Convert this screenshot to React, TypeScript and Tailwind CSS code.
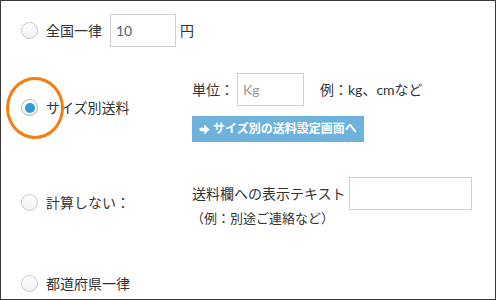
import React from "react";

const font = { fontFamily: 'Lato, "Noto Sans CJK JP", sans-serif' };

function Radio({ checked }: { checked?: boolean }) {
  return (
    <span
      className={`flex h-[17px] w-[17px] shrink-0 items-center justify-center rounded-full border ${
        checked ? "border-[#a9b6c3]" : "border-[#c9c9c9]"
      } bg-gradient-to-b from-white to-[#f1f1f1]`}
    >
      {checked && <span className="h-[10px] w-[10px] rounded-full bg-[#2f9bd7]" />}
    </span>
  );
}

function Arrow() {
  return (
    <svg width="11" height="11" viewBox="0 0 12 12" className="shrink-0">
      <path d="M1 4.4h5V1.2L11.2 6 6 10.8V7.6H1z" fill="white" stroke="white" strokeWidth="0.6" strokeLinejoin="round" />
    </svg>
  );
}

export default function App() {
  return (
    <div
      className="relative h-[300px] w-[496px] overflow-hidden border border-[#3a3a3a] bg-white text-[14px] text-[#333]"
      style={font}
    >
      {/* Row 1 */}
      <div className="flex items-center pl-[20px] pt-[13px]">
        <Radio />
        <span className="ml-[8px]">全国一律</span>
        <div className="ml-[8px] flex h-[33px] w-[66px] items-center border border-[#cfcfcf] pl-[5px] text-[#5a5f6b]">
          10
        </div>
        <span className="ml-[4px]">円</span>
      </div>

      {/* Row 2 */}
      <div className="mt-[26px] flex items-center pl-[20px]">
        <div className="flex w-[171px] items-center">
          <Radio checked />
          <span className="ml-[8px]">サイズ別送料</span>
        </div>
        <div className="flex flex-col">
          <div className="flex items-center">
            <span>単位：</span>
            <div className="ml-[3px] flex h-[33px] w-[67px] items-center border border-[#cfcfcf] pl-[5px] text-[#9a9a9a]">
              Kg
            </div>
            <span className="ml-[16px]">例：kg、cmなど</span>
          </div>
          <div className="mt-[10px] flex h-[26px] w-[172px] items-center gap-[3px] bg-[#6db2dd] pl-[7px] text-[12px] font-bold text-white">
            <Arrow />
            <span>サイズ別の送料設定画面へ</span>
          </div>
        </div>
      </div>

      {/* Row 3 */}
      <div className="mt-[35px] flex items-start pl-[20px]">
        <div className="mt-[15px] flex w-[171px] items-center">
          <Radio />
          <span className="ml-[8px]">計算しない：</span>
        </div>
        <div className="flex flex-col">
          <div className="flex items-center">
            <span>送料欄への表示テキスト</span>
            <div className="ml-[3px] h-[33px] w-[123px] border border-[#cfcfcf]" />
          </div>
          <span className="-mt-[1px] ml-[-1px] text-[13px]">（例：別途ご連絡など）</span>
        </div>
      </div>

      {/* Row 4 */}
      <div className="mt-[44px] flex items-center pl-[20px]">
        <Radio />
        <span className="ml-[8px]">都道府県一律</span>
      </div>

      {/* Annotation ellipse */}
      <div className="absolute left-[5px] top-[76px] h-[62px] w-[58px] rounded-[50%] border-[3px] border-[#f57d12]" />
    </div>
  );
}
